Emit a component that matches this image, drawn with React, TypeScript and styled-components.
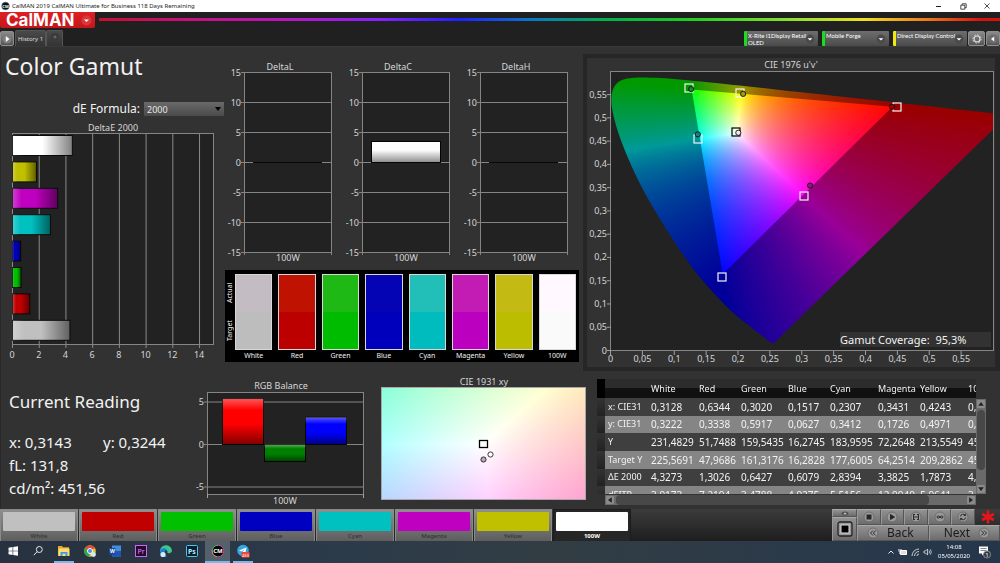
import React, { useEffect, useRef } from "react";
import styled, { createGlobalStyle, css } from "styled-components";

const FONT = '"Noto Sans", "Open Sans", sans-serif';

const GlobalStyle = createGlobalStyle`
  *, *::before, *::after { box-sizing: border-box; }
  html, body { margin: 0; background: #323232; }
  body { font-family: ${FONT}; color: #f2f2f2; overflow-x: hidden; }
  button, select { font-family: inherit; }
`;

/* ---------- colour science ---------- */

type Pair = [number, number];

const LOCUS_XY: Pair[] = [
  [0.1741, 0.005], [0.1714, 0.0051], [0.1644, 0.0109], [0.1566, 0.0177], [0.144, 0.0297],
  [0.1241, 0.0578], [0.1096, 0.0868], [0.0913, 0.1327], [0.0687, 0.2007], [0.0454, 0.295],
  [0.0235, 0.4127], [0.0082, 0.5384], [0.0039, 0.6548], [0.0139, 0.7502], [0.0389, 0.812],
  [0.0743, 0.8338], [0.1142, 0.8262], [0.1547, 0.8059], [0.2296, 0.7543], [0.3016, 0.6923],
  [0.3731, 0.6245], [0.4441, 0.5547], [0.5125, 0.4866], [0.5752, 0.4242], [0.627, 0.3725],
  [0.6915, 0.3083], [0.7347, 0.2653],
];

const xyToUv = ([x, y]: Pair): Pair => {
  const d = -2 * x + 12 * y + 3;
  return [(4 * x) / d, (9 * y) / d];
};

const uvToXy = ([u, v]: Pair): Pair => {
  const d = 6 * u - 16 * v + 12;
  return [(9 * u) / d, (4 * v) / d];
};

const xyToRgb = ([x, y]: Pair, gamma: number): [number, number, number] => {
  const X = x / y;
  const Z = (1 - x - y) / y;
  const lin = [
    3.2406 * X - 1.5372 - 0.4986 * Z,
    -0.9689 * X + 1.8758 + 0.0415 * Z,
    0.0557 * X - 0.204 + 1.057 * Z,
  ].map((c) => Math.max(0, c));
  const top = Math.max(...lin, 0.000001);
  return lin.map((c) => 255 * Math.pow(c / top, 1 / gamma)) as [number, number, number];
};

const MEASURED = {
  red: xyToUv([0.6344, 0.3338]),
  green: xyToUv([0.302, 0.5917]),
  blue: xyToUv([0.1517, 0.0627]),
};

type Shade = (fx: number, fy: number) => [number, number, number];

const CanvasFill = styled.canvas`
  display: block;
  width: 100%;
  height: 100%;
`;

function ShadedField({ width, height, shade }: { width: number; height: number; shade: Shade }) {
  const ref = useRef<HTMLCanvasElement>(null);
  useEffect(() => {
    const ctx = ref.current?.getContext("2d");
    if (!ctx) return;
    const image = ctx.createImageData(width, height);
    for (let j = 0; j < height; j++) {
      for (let i = 0; i < width; i++) {
        const [r, g, b] = shade((i + 0.5) / width, 1 - (j + 0.5) / height);
        image.data.set([r, g, b, 255], (j * width + i) * 4);
      }
    }
    ctx.putImageData(image, 0, 0);
  }, [width, height, shade]);
  return <CanvasFill ref={ref} width={width} height={height} />;
}

const gamutShade: Shade = (fx, fy) => xyToRgb(uvToXy([fx * 0.6, Math.max(fy * 0.6, 0.001)]), 1.2);
const whiteShade: Shade = (fx, fy) =>
  xyToRgb([0.3127 + (fx - 0.5) * 0.088, 0.329 + (fy - 0.5) * 0.09], 2.2);

/* ---------- window chrome ---------- */

const Page = styled.div`
  display: flex;
  flex-direction: column;
  min-height: 100vh;
  background: #323232;
`;

const TitleBar = styled.header`
  display: flex;
  align-items: center;
  height: 12px;
  padding: 0 6px 0 1px;
  background: #fff;
  color: #222;
  font-size: 6px;
  line-height: 12px;
`;

const TitleText = styled.span`
  flex: 1;
  margin-left: 2px;
`;

const PlainButton = styled.button`
  display: flex;
  align-items: center;
  justify-content: center;
  padding: 0;
  border: 0;
  background: none;
  color: inherit;
`;

const WindowButton = styled(PlainButton)`
  width: 14px;
  height: 12px;
  margin-left: 10px;
`;

const Brand = styled.div`
  display: flex;
  align-items: flex-start;
  height: 18px;
  background: #202020;
`;

const Logo = styled.button`
  display: flex;
  align-items: center;
  justify-content: space-between;
  width: 95px;
  height: 16px;
  padding: 0 3px 0 6px;
  border: 0;
  border-radius: 0 0 2px 2px;
  background: linear-gradient(#dc2024, #c4161b);
  color: #fff;
  font: 700 17px/16px Inter, sans-serif;
`;

const Rainbow = styled.div`
  flex: 1;
  height: 3px;
  margin: 6px 0 0 4px;
  background: linear-gradient(90deg, #c8102e 0%, #c81078 9%, #b418c8 22%, #8a20ff 31%, #2020ff 40%, #0878c8 48%, #00b050 56%, #20d020 66%, #90e030 77%, #f0e020 85%, #f07818 92%, #d81010 98%);
`;

const TabRow = styled.nav`
  display: flex;
  align-items: flex-end;
  height: 16px;
  background: #202020;
`;

const GreyButton = styled(PlainButton)`
  border: 1px solid #8e8e8e;
  border-radius: 2px;
  background: linear-gradient(#8a8a8a, #555);
`;

const SideButton = styled(GreyButton)<{ $w: number }>`
  width: ${(p) => p.$w}px;
  height: 15px;
  margin-left: 1px;
`;

const PlayToggle = styled(GreyButton)`
  width: 14px;
  height: 15px;
  margin-right: 1px;
`;

const Tab = styled.button<{ $w: number }>`
  width: ${(p) => p.$w}px;
  height: 16px;
  padding: 0;
  border: 1px solid #555;
  border-bottom: 0;
  border-radius: 2px 2px 0 0;
  background: linear-gradient(#4a4a4a, #333);
  color: #ddd;
  font-size: 6px;
  line-height: 14px;
`;

const Spacer = styled.div`
  flex: 1;
`;

const Device = styled.button<{ $accent: string; $w: number }>`
  display: flex;
  align-items: center;
  justify-content: space-between;
  width: ${(p) => p.$w}px;
  height: 15px;
  margin-left: 4px;
  padding: 0 3px 0 1px;
  border: 0;
  border-left: 3px solid ${(p) => p.$accent};
  border-radius: 1px;
  background: linear-gradient(#6e6e6e, #4b4b4b);
  color: #fff;
  font-family: Lato, sans-serif;
  font-size: 6px;
  line-height: 7px;
  text-align: left;
  white-space: nowrap;
`;

const DeviceText = styled.span`
  align-self: flex-start;
  flex: 1;
  min-width: 0;
  margin-top: 1px;
`;

const KnobSvg = styled.svg`
  flex: none;
`;

function Knob() {
  return (
    <KnobSvg width="10" height="10" viewBox="0 0 10 10" aria-hidden="true">
      <circle cx="5" cy="5" r="4.4" fill="#4a4a4a" />
      <path d="M2.6 4.2h4.8L5 6.6z" fill="#fff" />
    </KnobSvg>
  );
}

/* ---------- content layout ---------- */

const Content = styled.main`
  flex: 1;
  border-left: 1px solid #282828;
  border-top: 1px solid #3a3a3a;
`;

const TopRow = styled.div`
  display: grid;
  grid-template-columns: minmax(0, 224fr) minmax(0, 354fr) minmax(0, 421fr);
  align-items: start;
`;

const BottomRow = styled.div`
  display: grid;
  grid-template-columns: minmax(0, 188fr) minmax(0, 185fr) minmax(0, 215fr) minmax(0, 411fr);
  align-items: start;
`;

const Chart = styled.svg`
  display: block;
  width: 100%;
  height: auto;
  font-family: ${FONT};
  font-size: 9px;
  fill: #d6d6d6;
`;

const PageTitle = styled.h1`
  margin: 4px 0 0 4px;
  font-size: 23px;
  line-height: 31px;
  font-weight: 400;
`;

const FormulaRow = styled.label`
  display: flex;
  align-items: center;
  justify-content: flex-end;
  gap: 4px;
  margin: 19px 0 3px;
  padding-right: 1px;
  font-size: 12px;
  line-height: 16px;
`;

const FormulaSelect = styled.select`
  appearance: none;
  width: 80px;
  height: 14px;
  padding: 1px 3px 0;
  border: 0;
  border-radius: 0;
  background: linear-gradient(180deg, #6a6a6a, #4a4a4a);
  color: #e6e6e6;
  font-size: 9px;
  line-height: 13px;
`;

const SelectWrap = styled.span`
  position: relative;
  display: flex;
`;

const SelectArrow = styled.svg`
  position: absolute;
  right: 2px;
  top: 5px;
  pointer-events: none;
`;

const ChartStrip = styled.div`
  display: grid;
  grid-template-columns: repeat(3, minmax(0, 1fr));
`;

/* ---------- DeltaE chart ---------- */

const DELTA_E = [
  { name: "100W", value: 4.48, color: "#ffffff" },
  { name: "Yellow", value: 1.79, color: "#c0c000" },
  { name: "Magenta", value: 3.38, color: "#c000c0" },
  { name: "Cyan", value: 2.84, color: "#00c0c0" },
  { name: "Blue", value: 0.61, color: "#0000c0" },
  { name: "Green", value: 0.64, color: "#00c000" },
  { name: "Red", value: 1.3, color: "#c00000" },
  { name: "White", value: 4.3, color: "#c0c0c0" },
];

function DeltaEChart() {
  const unit = 13.36;
  return (
    <Chart viewBox="0 0 224 250" role="img" aria-label="DeltaE 2000">
      <defs>
        <linearGradient id="barSheen">
          <stop offset="0" stopColor="#fff" stopOpacity=".25" />
          <stop offset=".2" stopColor="#fff" stopOpacity="0" />
          <stop offset=".5" stopColor="#000" stopOpacity="0" />
          <stop offset="1" stopColor="#000" stopOpacity=".5" />
        </linearGradient>
      </defs>
      <text x="112" y="11" textAnchor="middle">DeltaE 2000</text>
      <rect x="11.5" y="13.5" width="201" height="211" fill="#222" stroke="#858585" />
      {[0, 2, 4, 6, 8, 10, 12, 14].map((n) => (
        <g key={n}>
          <path d={`M${11.5 + n * unit} 14V228`} stroke="#8a8a8a" />
          <text x={11 + n * unit} y="238" textAnchor="middle">{n}</text>
        </g>
      ))}
      {DELTA_E.map((bar, i) => {
        const box = { x: 11.5, y: 15.5 + i * 26.4, width: bar.value * unit, height: 20 };
        return (
          <g key={bar.name}>
            <rect {...box} fill={bar.color} stroke="#0a0a0a" />
            <rect {...box} fill="url(#barSheen)" />
          </g>
        );
      })}
    </Chart>
  );
}

/* ---------- Delta L / C / H ---------- */

function DeltaChart({ title, value }: { title: string; value: number }) {
  const zero = 115.5;
  return (
    <Chart viewBox="0 0 118 223" role="img" aria-label={title}>
      <defs>
        <linearGradient id="whiteBar" x2="0" y2="1">
          <stop offset=".4" stopColor="#fff" />
          <stop offset="1" stopColor="#8c8c8c" />
        </linearGradient>
      </defs>
      <text x="55" y="23" textAnchor="middle">{title}</text>
      <rect x="19.5" y="25.5" width="87" height="180" fill="#222" stroke="#858585" />
      {[15, 10, 5, 0, -5, -10, -15].map((n) => (
        <g key={n}>
          <path d={`M16 ${zero - n * 6}H106`} stroke="#858585" />
          <text x="16" y={zero - n * 6 + 3} textAnchor="end">{n}</text>
        </g>
      ))}
      <path d="M19.5 205v3M106.5 205v3" stroke="#858585" />
      {value > 0 ? (
        <rect x="28.5" y={zero - value * 6} width="69" height={value * 6} fill="url(#whiteBar)" stroke="#050505" />
      ) : (
        <path d={`M28 ${zero}h69`} stroke="#080808" />
      )}
      <text x="63" y="214" textAnchor="middle">100W</text>
    </Chart>
  );
}

/* ---------- swatch comparison ---------- */

const SWATCHES = [
  { name: "White", actual: "#c3bdc3", target: "#bdbdbd" },
  { name: "Red", actual: "#c01200", target: "#bc0000" },
  { name: "Green", actual: "#1eb914", target: "#00bc00" },
  { name: "Blue", actual: "#0404b4", target: "#0000bc" },
  { name: "Cyan", actual: "#22bfb9", target: "#00bcbf" },
  { name: "Magenta", actual: "#c31cb5", target: "#bc00bf" },
  { name: "Yellow", actual: "#c3bb14", target: "#bcbc00" },
  { name: "100W", actual: "#fff8fe", target: "#fafafa" },
];

const SwatchPanel = styled.section`
  display: flex;
  padding: 4px 3px 0 0;
  height: 92px;
  background: #000;
  font-size: 7px;
  line-height: 11px;
`;

const SwatchSide = styled.div`
  display: flex;
  flex-direction: column;
  width: 10px;
  height: 76px;
`;

const SideLabel = styled.span`
  flex: 1;
  writing-mode: vertical-rl;
  transform: rotate(180deg);
  text-align: center;
  line-height: 10px;
`;

const SwatchList = styled.div`
  flex: 1;
  display: grid;
  grid-template-columns: repeat(8, minmax(0, 1fr));
  gap: 6px;
`;

const SwatchItem = styled.figure`
  margin: 0;
`;

const SwatchColor = styled.div<{ $actual: string; $target: string }>`
  height: 76px;
  border: 1px solid #d8d8d8;
  background: linear-gradient(${(p) => p.$actual} 50%, ${(p) => p.$target} 50%);
`;

const SwatchName = styled.figcaption`
  text-align: center;
`;

/* ---------- CIE 1976 ---------- */

const GamutPanel = styled.section`
  margin: 7px 0 0 4px;
  border: 4px solid #262626;
  border-right-width: 5px;
  background: #323232;
`;

const ORIGIN = { x: 23.5, y: 292.5 };
const U = 637.5;
const V = 465.3;
const toPlot = ([u, v]: Pair): Pair => [ORIGIN.x + u * U, ORIGIN.y - v * V];

function smoothLocus() {
  const p = LOCUS_XY.map(xyToUv).map(toPlot);
  let d = `M${p[0].join(" ")}`;
  for (let i = 0; i < p.length - 1; i++) {
    const a = p[Math.max(i - 1, 0)];
    const b = p[i];
    const c = p[i + 1];
    const e = p[Math.min(i + 2, p.length - 1)];
    d += `C${b[0] + (c[0] - a[0]) / 6} ${b[1] + (c[1] - a[1]) / 6} ${c[0] - (e[0] - b[0]) / 6} ${c[1] - (e[1] - b[1]) / 6} ${c[0]} ${c[1]}`;
  }
  return d + "Z";
}

const LOCUS_PATH = smoothLocus();
const TRIANGLE_PATH =
  "M" + [MEASURED.red, MEASURED.green, MEASURED.blue].map((c) => toPlot(c).join(" ")).join("L") + "Z";

const TARGETS: { uv: Pair; dark?: boolean }[] = [
  { uv: [0.4495, 0.5229] },
  { uv: [0.1235, 0.5635] },
  { uv: [0.1754, 0.159] },
  { uv: [0.137, 0.4555] },
  { uv: [0.304, 0.3315] },
  { uv: [0.203, 0.553] },
  { uv: [0.1965, 0.469], dark: true },
];

const READINGS: { uv: Pair; fill: string }[] = [
  { uv: [0.4415, 0.5237], fill: "#9a0008" },
  { uv: [0.1265, 0.5618], fill: "#089028" },
  { uv: [0.208, 0.5515], fill: "#a89a10" },
  { uv: [0.137, 0.4645], fill: "#108880" },
  { uv: [0.313, 0.3545], fill: "#8c1a80" },
  { uv: [0.2005, 0.468], fill: "#f4e8f0" },
];

const tickLabel = (n: number) => String(Math.round(n * 100) / 100).replace(".", ",");

function GamutChart() {
  const ticks = Array.from({ length: 12 }, (_, i) => i * 0.05);
  return (
    <Chart viewBox="0 0 408 309" role="img" aria-label="CIE 1976 u'v'">
      <defs>
        <clipPath id="plotArea"><rect x="23" y="13" width="383" height="280" /></clipPath>
        <clipPath id="locus"><path d={LOCUS_PATH} clipPath="url(#plotArea)" /></clipPath>
      </defs>
      <text x="204" y="10" textAnchor="middle">CIE 1976 u'v'</text>
      <rect x="23.5" y="13.5" width="383" height="279" fill="#222" stroke="#858585" />
      {ticks.map((n) => (
        <g key={n}>
          <path d={`M${ORIGIN.x + n * U} 293v4M20 ${ORIGIN.y - n * V}h4`} stroke="#a0a0a0" />
          <text x={ORIGIN.x + n * U} y="304" textAnchor="middle">{tickLabel(n)}</text>
          <text x="20" y={ORIGIN.y - n * V + 3} textAnchor="end">{tickLabel(n)}</text>
        </g>
      ))}
      <g clipPath="url(#locus)">
        <foreignObject x="23.5" y="13.5" width="382.5" height="279">
          <ShadedField width={383} height={279} shade={gamutShade} />
        </foreignObject>
        <path d={`M23 13H407V293H23Z${TRIANGLE_PATH}`} fillRule="evenodd" fill="#000" fillOpacity=".4" />
      </g>
      <path d="M406.500 13V293" stroke="#858585" />
      {TARGETS.map(({ uv, dark }) => {
        const [x, y] = toPlot(uv);
        return <rect key={uv.join()} x={Math.round(x) - 4} y={Math.round(y) - 4} width="8" height="8" fill="none" stroke={dark ? "#000" : "#f4f4f4"} strokeWidth="1.200" />;
      })}
      {READINGS.map(({ uv, fill }) => {
        const [x, y] = toPlot(uv);
        return <circle key={uv.join()} cx={x} cy={y} r="2.600" fill={fill} stroke="#111" strokeWidth=".9" />;
      })}
      <rect x="253" y="274" width="151" height="15" fill="#323232" />
      <text x="253" y="286" fontSize="11" fill="#f2f2f2" xmlSpace="preserve">Gamut Coverage:  95,3%</text>
    </Chart>
  );
}

/* ---------- current reading ---------- */

const Readings = styled.section`
  padding: 19px 0 0 8px;
  font-size: 15px;
  line-height: 23px;
`;

const ReadingTitle = styled.h2`
  margin: 0 0 18px;
  font-size: 17px;
  line-height: 23px;
  font-weight: 400;
`;

const ReadingLine = styled.div`
  display: grid;
  grid-template-columns: 94px 1fr;
`;

const BALANCE = [
  { x: 33.5, value: 5.4, color: "#ff0000" },
  { x: 75.5, value: -2, color: "#008000" },
  { x: 116.5, value: 3.2, color: "#0000ff" },
];

function BalanceChart() {
  const zero = 73.5;
  return (
    <Chart viewBox="0 0 185 138" role="img" aria-label="RGB Balance">
      <defs>
        <linearGradient id="column" x2="0" y2="1">
          <stop offset="0" stopColor="#fff" stopOpacity=".35" />
          <stop offset=".25" stopColor="#fff" stopOpacity="0" />
          <stop offset=".55" stopColor="#000" stopOpacity="0" />
          <stop offset="1" stopColor="#000" stopOpacity=".5" />
        </linearGradient>
      </defs>
      <text x="92" y="18" textAnchor="middle">RGB Balance</text>
      <rect x="18.500" y="21.500" width="156" height="102" fill="#222" stroke="#858585" />
      {[5, 0, -5].map((n) => (
        <g key={n}>
          <path d={`M15 ${zero - n * 8.5}H174`} stroke="#858585" />
          <text x="15" y={zero - n * 8.5 + 3} textAnchor="end">{n}</text>
        </g>
      ))}
      <path d="M18.500 123v4M174.500 123v4" stroke="#a0a0a0" />
      {BALANCE.map((b) => {
        const size = Math.abs(b.value) * 8.5;
        const box = { x: b.x, y: b.value > 0 ? zero - size : zero, width: 41, height: size };
        return (
          <g key={b.color}>
            <rect {...box} fill={b.color} stroke="#050505" />
            <rect {...box} fill="url(#column)" />
          </g>
        );
      })}
      <text x="96" y="133" textAnchor="middle">100W</text>
    </Chart>
  );
}

function WhitePointChart() {
  return (
    <Chart viewBox="0 0 215 138" role="img" aria-label="CIE 1931 xy">
      <text x="110" y="14" textAnchor="middle">CIE 1931 xy</text>
      <foreignObject x="8" y="17" width="204" height="112">
        <ShadedField width={204} height={112} shade={whiteShade} />
      </foreignObject>
      <rect x="7.500" y="16.500" width="204" height="112" fill="none" stroke="#a8a8a8" />
      <rect x="105.500" y="69.500" width="8" height="7" fill="none" stroke="#000" strokeWidth="1.300" />
      <circle cx="116.500" cy="83.500" r="2.600" fill="#fff" stroke="#222" strokeWidth=".9" />
      <circle cx="109.500" cy="88.500" r="2.600" fill="#b8a8b8" stroke="#222" strokeWidth=".9" />
    </Chart>
  );
}

/* ---------- data table ---------- */

const COLUMNS = ["White", "Red", "Green", "Blue", "Cyan", "Magenta", "Yellow", "100W"];
const COLUMN_WIDTHS = [48, 42, 47, 42, 48, 42, 48, 48];
const ROWS: [string, string[]][] = [
  ["x: CIE31", ["0,3128", "0,6344", "0,3020", "0,1517", "0,2307", "0,3431", "0,4243", "0,3143"]],
  ["y: CIE31", ["0,3222", "0,3338", "0,5917", "0,0627", "0,3412", "0,1726", "0,4971", "0,3244"]],
  ["Y", ["231,4829", "51,7488", "159,5435", "16,2745", "183,9595", "72,2648", "213,5549", "451,5600"]],
  ["Target Y", ["225,5691", "47,9686", "161,3176", "16,2828", "177,6005", "64,2514", "209,2862", "451,5600"]],
  ["ΔE 2000", ["4,3273", "1,3026", "0,6427", "0,6079", "2,8394", "3,3825", "1,7873", "4,4800"]],
  ["dEITP", ["3,9173", "7,2194", "3,4788", "4,9275", "5,5156", "12,9949", "5,9641", "3,9000"]],
];

const DataPanel = styled.section`
  display: grid;
  grid-template-columns: minmax(0, 1fr) 10px;
  grid-template-rows: 115px 11px;
  margin: 8px 14px 0 8px;
`;

const TableClip = styled.div`
  overflow: hidden;
`;

const DataTable = styled.table`
  width: 416px;
  height: 125px;
  table-layout: fixed;
  border-collapse: collapse;
  font-size: 9px;
  line-height: 14px;
`;

const HeadRow = styled.tr`
  height: 19px;
  background: linear-gradient(#2c2c2c 50%, #111 50%);
`;

const cell = css`
  padding: 0 0 0 3px;
  overflow: hidden;
  font-weight: 400;
  text-align: left;
  white-space: nowrap;
`;

const HeadCell = styled.th`${cell}`;
const DataCell = styled.td`
  ${cell}
  font-size: 10px;
`;

const Gutter = styled.td<{ $head?: boolean }>`
  padding: 0;
  background: ${(p) => (p.$head ? "#000" : "linear-gradient(#333, #222)")};
`;

const BodyRow = styled.tr`
  background: #3f3f3f;
  &:nth-child(even) { background: #858585; }
`;

const ScrollY = styled.div`
  display: grid;
  grid-template-rows: 10px 1fr 10px;
  margin-top: 20px;
  background: #6a6a6a;
`;

const ScrollX = styled.div`
  display: grid;
  grid-template-columns: 10px 1fr 10px;
  margin: 1px 0 0 8px;
  background: #6a6a6a;
`;

const ScrollButton = styled(PlainButton)`
  border: 1px solid #6a6a6a;
  border-radius: 2px;
  background: #8a8a8a;
`;

const Thumb = styled.div<{ $vertical?: boolean }>`
  border-radius: 4px;
  background: #484848;
  margin: ${(p) => (p.$vertical ? "1px 1px 14px" : "0 37px 0 1px")};
`;

function Arrow({ turn }: { turn: number }) {
  return (
    <svg width="6" height="6" viewBox="0 0 6 6" aria-hidden="true">
      <path d="M3 1L5.800 4.800H.2z" fill="#222" transform={`rotate(${turn} 3 3)`} />
    </svg>
  );
}

/* ---------- pattern bar ---------- */

const PatternBar = styled.div`
  display: flex;
  height: 32px;
  background: linear-gradient(#3c3c3c, #1e1e1e);
`;

const PatternList = styled.div`
  display: grid;
  flex: 632 1 0;
  grid-template-columns: repeat(8, minmax(0, 1fr));
`;

const PatternButton = styled.button<{ $on?: boolean }>`
  display: flex;
  flex-direction: column;
  margin: 0 1px 0 0;
  padding: 2px 2px 0;
  border: 1px solid ${(p) => (p.$on ? "#1c1c1c" : "#8a8a8a")};
  border-bottom-color: #444;
  background: ${(p) => (p.$on ? "#262626" : "linear-gradient(#8e8e8e, #5e5e5e)")};
  color: ${(p) => (p.$on ? "#fff" : "#333")};
  font-size: 6px;
  line-height: 10px;
  font-weight: ${(p) => (p.$on ? 700 : 500)};
`;

const PatternColor = styled.span<{ $color: string }>`
  width: 100%;
  height: 19px;
  border-radius: 1px;
  background: ${(p) => p.$color};
`;

const PatternName = styled.span`
  width: 100%;
  text-align: center;
`;

const Transport = styled.div`
  display: grid;
  flex: 368 1 0;
  grid-template-columns: 1fr 25px 143px;
`;

const StopColumn = styled.div`
  grid-column: 2;
  display: grid;
  grid-template-rows: 8px 24px;
`;

const TransportButton = styled(PlainButton)`
  border: 1px solid #a0a0a0;
  border-color: #a8a8a8 #555 #555 #999;
  background: linear-gradient(#929292, #6c6c6c);
`;

const TransportMain = styled.div`
  display: grid;
  grid-template-rows: 16px 16px;
`;

const IconRow = styled.div`
  display: grid;
  grid-template-columns: repeat(5, minmax(0, 1fr)) 25px;
`;

const NavRow = styled.div`
  display: grid;
  grid-template-columns: 1fr 1fr;
`;

const NavButton = styled(TransportButton)<{ $end?: boolean }>`
  justify-content: ${(p) => (p.$end ? "flex-end" : "flex-start")};
  gap: 8px;
  padding: 0 9px;
  color: #1c1c1c;
  font-size: 12px;
  line-height: 14px;
`;

const Center = styled.span`
  display: flex;
  align-items: center;
  justify-content: center;
`;

function RoundIcon({ children }: { children: React.ReactNode }) {
  return (
    <svg width="12" height="12" viewBox="0 0 12 12" fill="none" stroke="#2a2a2a" strokeWidth="1" aria-hidden="true">
      <circle cx="6" cy="6" r="5" fill="#9a9a9a" stroke="#6e6e6e" />
      {children}
    </svg>
  );
}

const TRANSPORT_ICONS: [string, React.ReactNode][] = [
  ["Stop", <rect key="i" x="4" y="4" width="4" height="4" fill="#222" />],
  ["Play", <path key="i" d="M4.500 3.500L8.500 6L4.500 8.500z" fill="#222" />],
  ["Sequence", <path key="i" d="M3.500 3v6M8.500 3v6M3.500 6h5M5 3.500h-1.500M7 3.500h1.500M5 8.500h-1.500M7 8.500h1.500" />],
  ["Continuous", <path key="i" d="M6 6C5 4.500 3 4.500 3 6S5 7.500 6 6S9 4.500 9 6S7 7.500 6 6" />],
  ["Refresh", <path key="i" d="M3.300 5.500A2.800 2.800 0 0 1 8.200 4.200M8.700 2.600v2H6.700M8.700 6.500A2.800 2.800 0 0 1 3.800 7.800M3.300 9.400v-2h2" />],
];

/* ---------- taskbar ---------- */

const Taskbar = styled.footer`
  display: flex;
  height: 22px;
  background: linear-gradient(90deg, #27313f 0%, #2c3b4a 35%, #323d43 55%, #2b3a4a 80%, #25364b 100%);
`;

const TaskButton = styled(PlainButton)<{ $open?: boolean; $active?: boolean }>`
  height: 22px;
  border: solid transparent;
  border-width: 0 0 2px;
  ${(p) => p.$open && css`
    background: linear-gradient(#76b9ed, #76b9ed) bottom / 20px 2px no-repeat border-box;
  `}
  ${(p) => p.$active && css`
    border-bottom-color: #76b9ed;
    background: #54606c;
  `}
`;

const TaskList = styled.div`
  display: grid;
  grid-template-columns: repeat(10, minmax(0, 1fr));
  width: 256px;
`;

const Tray = styled.div`
  display: flex;
  align-items: center;
  gap: 3px;
  margin-left: auto;
  padding-right: 9px;
`;

const Clock = styled.time`
  margin: 0 5px 0 3px;
  font-size: 6px;
  line-height: 9px;
  text-align: center;
  color: #fff;
`;

const TASKS: { name: string; open?: boolean; active?: boolean; icon: React.ReactNode }[] = [
  { name: "Start", icon: <path d="M2.500 3.700L6.600 3v3.700H2.500zM7.200 2.900L12 2.200v4.500H7.200zM2.500 7.300h4.100V11l-4.100-.7zM7.200 7.300H12v4.500l-4.800-.7z" fill="#fff" /> },
  { name: "Search", icon: <g fill="none" stroke="#e8e8e8"><circle cx="8.300" cy="5.500" r="3" /><path d="M6 7.800L2.800 11.200" /></g> },
  { name: "File Explorer", open: true, icon: <g><path d="M1 2h4l1 1.200h6V12H1z" fill="#e5a92a" /><path d="M1.500 4.500h11V12h-11z" fill="#ffdb74" /><path d="M3.500 8h7v4h-2V9.800h-3V12h-2z" fill="#3b9ce0" /></g> },
  { name: "Chrome", icon: <g><circle cx="7" cy="7" r="5.800" fill="#f1c52c" /><path d="M7 7L2 4A5.800 5.800 0 0 1 12 4z" fill="#e04a3a" /><path d="M7 7L2 4A5.800 5.800 0 0 0 6.500 12.800z" fill="#30a552" /><circle cx="7" cy="7" r="2.500" fill="#4a90e8" stroke="#fff" /><circle cx="10.500" cy="10.500" r="2.400" fill="#d7e9f0" /></g> },
  { name: "Word", icon: <g><path d="M4 1.500h9v11H4z" fill="#3f8ee0" /><path d="M4 7h9v5.500H4z" fill="#1d55b0" /><path d="M1 4h6.500v6.500H1z" fill="#1a4aa0" /><text x="2" y="9" fontSize="5" fontWeight="700" fill="#fff">W</text></g> },
  { name: "Premiere", icon: <g><rect x="1.500" y="1.500" width="11" height="11" fill="#2a0634" stroke="#c46cf0" /><text x="3.500" y="9.800" fontSize="7" fill="#e48cff">Pr</text></g> },
  { name: "Edge", icon: <g><path d="M1 8A6 6 0 0 1 13 6.500C13 9 10.500 9.500 8.500 9C9 6 6 5 4 6.500S1.500 8 1 8z" fill="#3fc58c" /><path d="M1 8C1 4 6 3 8 6C5 6 4.500 10 8 12.800A6 6 0 0 1 1 8z" fill="#1b7fd4" /><circle cx="4" cy="10.500" r="2.600" fill="#d5ecf6" /></g> },
  { name: "Photoshop", icon: <g><rect x="1.500" y="1.500" width="11" height="11" rx="1" fill="#06202c" stroke="#49c8f5" /><text x="3" y="9.800" fontSize="7" fontWeight="700" fill="#bdeaff">Ps</text></g> },
  { name: "CalMAN", active: true, icon: <g><circle cx="7" cy="7" r="5.800" fill="#050505" stroke="#b04ca0" /><path d="M7 1.200A5.800 5.800 0 0 0 1.200 7" stroke="#4ab04a" fill="none" /><path d="M1.200 7A5.800 5.800 0 0 0 6 12.700" stroke="#d09030" fill="none" /><text x="7" y="9.200" textAnchor="middle" fontSize="6" fontWeight="700" fill="#fff">CM</text></g> },
  { name: "Telegram", open: true, icon: <g><circle cx="7" cy="6.500" r="5.800" fill="#35a6de" /><path d="M3 6.500L10.500 3.500L9.200 9.500L6.500 7.800L9 5L5.400 7.400z" fill="#fff" /><rect x="5.500" y="8" width="8" height="5.500" rx="1" fill="#ee4540" /><text x="9.500" y="12.500" textAnchor="middle" fontSize="4" fill="#fff">433</text></g> },
];

export default function App() {
  return (
    <Page>
      <GlobalStyle />
      <TitleBar>
        <svg width="9" height="10" viewBox="0 0 9 10" aria-hidden="true">
          <circle cx="4.500" cy="5" r="3.800" fill="#111" stroke="#2a6a80" strokeWidth=".6" />
          <text x="4.500" y="6.600" textAnchor="middle" fontSize="4" fontWeight="700" fill="#fff">CM</text>
        </svg>
        <TitleText>CalMAN 2019 CalMAN Ultimate for Business 118 Days Remaining</TitleText>
        <WindowButton aria-label="Minimize"><svg width="6" height="6"><path d="M0 3.500h5" stroke="#222" /></svg></WindowButton>
        <WindowButton aria-label="Restore"><svg width="7" height="7" fill="none" stroke="#222" strokeWidth=".8"><path d="M.8 2.200h4v4h-4zM2.200 2V.8h4v4H5" /></svg></WindowButton>
        <WindowButton aria-label="Close"><svg width="6" height="6"><path d="M.5.5l5 5M5.500.5l-5 5" stroke="#222" strokeWidth=".8" /></svg></WindowButton>
      </TitleBar>
      <Brand>
        <Logo>
          CalMAN
          <svg width="11" height="11" viewBox="0 0 11 11" aria-hidden="true"><circle cx="5.500" cy="5.500" r="5" fill="#d8383b" /><path d="M3 4.500h5L5.500 7z" fill="#fff" /></svg>
        </Logo>
        <Rainbow />
      </Brand>
      <TabRow>
        <PlayToggle aria-label="Show workflow"><svg width="10" height="10"><circle cx="5" cy="5" r="4.500" fill="#7d7d7d" /><path d="M3.800 2L7.500 5L3.800 8z" fill="#fff" /></svg></PlayToggle>
        <Tab $w={31}>History 1</Tab>
        <Tab $w={17} aria-label="New history"><svg width="8" height="8"><circle cx="4" cy="4" r="4" fill="#3a3a3a" /><path d="M2.500 4h3M4 2.500v3" stroke="#777" /></svg></Tab>
        <Spacer />
        <Device $w={74} $accent="#18e018"><DeviceText>X-Rite i1Display Retail<br />OLED</DeviceText><Knob /></Device>
        <Device $w={67} $accent="#18e018"><DeviceText>Mobile Forge</DeviceText><Knob /></Device>
        <Device $w={74} $accent="#f0e810"><DeviceText>Direct Display Control</DeviceText><Knob /></Device>
        <SideButton $w={17} aria-label="Settings"><svg width="10" height="10"><circle cx="5" cy="5" r="3" fill="none" stroke="#ddd" strokeWidth="1.200" /><circle cx="5" cy="5" r="4.100" fill="none" stroke="#ddd" strokeDasharray="1.600 1.600" /></svg></SideButton>
        <SideButton $w={14} aria-label="Collapse"><svg width="10" height="10"><circle cx="5" cy="5" r="4.500" fill="#6d6d6d" /><path d="M6.200 2.500L3 5l3.200 2.500z" fill="#fff" /></svg></SideButton>
      </TabRow>

      <Content>
        <TopRow>
          <div>
            <PageTitle>Color Gamut</PageTitle>
            <FormulaRow>
              dE Formula:
              <SelectWrap>
                <FormulaSelect defaultValue="2000"><option>2000</option></FormulaSelect>
                <SelectArrow width="8" height="5"><path d="M1 0h6L4 4z" fill="#000" /></SelectArrow>
              </SelectWrap>
            </FormulaRow>
            <DeltaEChart />
          </div>
          <div>
            <ChartStrip>
              <DeltaChart title="DeltaL" value={0} />
              <DeltaChart title="DeltaC" value={3.5} />
              <DeltaChart title="DeltaH" value={0} />
            </ChartStrip>
            <SwatchPanel>
              <SwatchSide><SideLabel>Actual</SideLabel><SideLabel>Target</SideLabel></SwatchSide>
              <SwatchList>
                {SWATCHES.map((s) => (
                  <SwatchItem key={s.name}>
                    <SwatchColor $actual={s.actual} $target={s.target} />
                    <SwatchName>{s.name}</SwatchName>
                  </SwatchItem>
                ))}
              </SwatchList>
            </SwatchPanel>
          </div>
          <GamutPanel><GamutChart /></GamutPanel>
        </TopRow>

        <BottomRow>
          <Readings>
            <ReadingTitle>Current Reading</ReadingTitle>
            <ReadingLine><span>x: 0,3143</span><span>y: 0,3244</span></ReadingLine>
            <div>fL: 131,8</div>
            <div>cd/m²: 451,56</div>
          </Readings>
          <BalanceChart />
          <WhitePointChart />
          <DataPanel>
            <TableClip>
              <DataTable>
                <colgroup>
                  <col style={{ width: 8 }} />
                  <col style={{ width: 43 }} />
                  {COLUMN_WIDTHS.map((w, i) => <col key={i} style={{ width: w }} />)}
                </colgroup>
                <thead>
                  <HeadRow>
                    <Gutter $head />
                    <HeadCell />
                    {COLUMNS.map((c) => <HeadCell key={c} scope="col">{c}</HeadCell>)}
                  </HeadRow>
                </thead>
                <tbody>
                  {ROWS.map(([label, values]) => (
                    <BodyRow key={label}>
                      <Gutter />
                      <HeadCell scope="row">{label}</HeadCell>
                      {values.map((v, i) => <DataCell key={i}>{v}</DataCell>)}
                    </BodyRow>
                  ))}
                </tbody>
              </DataTable>
            </TableClip>
            <ScrollY>
              <ScrollButton aria-label="Scroll up"><Arrow turn={0} /></ScrollButton>
              <Thumb $vertical />
              <ScrollButton aria-label="Scroll down"><Arrow turn={180} /></ScrollButton>
            </ScrollY>
            <ScrollX>
              <ScrollButton aria-label="Scroll left"><Arrow turn={-90} /></ScrollButton>
              <Thumb />
              <ScrollButton aria-label="Scroll right"><Arrow turn={90} /></ScrollButton>
            </ScrollX>
          </DataPanel>
        </BottomRow>
      </Content>

      <PatternBar>
        <PatternList>
          {["#c0c0c0", "#c00000", "#00c000", "#0000c0", "#00c0c0", "#c000c0", "#c0c000", "#ffffff"].map((color, i) => (
            <PatternButton key={color} $on={i === 7}>
              <PatternColor $color={color} />
              <PatternName>{COLUMNS[i]}</PatternName>
            </PatternButton>
          ))}
        </PatternList>
        <Transport>
          <StopColumn>
            <TransportButton aria-label="Expand"><svg width="8" height="5"><ellipse cx="4" cy="2.500" rx="3.500" ry="2" fill="#555" /><path d="M2.500 3.200L4 1.500l1.500 1.700z" fill="#ddd" /></svg></TransportButton>
            <TransportButton aria-label="Pattern window"><svg width="16" height="16"><rect x="1" y="1" width="14" height="14" rx="2" fill="#999" stroke="#222" strokeWidth="1.300" /><rect x="4" y="4" width="8" height="8" fill="#000" stroke="#ddd" /></svg></TransportButton>
          </StopColumn>
          <TransportMain>
            <IconRow>
              {TRANSPORT_ICONS.map(([name, icon]) => (
                <TransportButton key={name} aria-label={name}><RoundIcon>{icon}</RoundIcon></TransportButton>
              ))}
              <Center>
                <svg width="16" height="16" viewBox="0 0 16 16" aria-hidden="true"><path d="M8 1.500v13M2.200 5l11.600 6M2.200 11l11.600-6" stroke="#e8141c" strokeWidth="2.600" /></svg>
              </Center>
            </IconRow>
            <NavRow>
              <NavButton><RoundIcon><path d="M6 3.500L3.500 6L6 8.500M8.800 3.500L6.300 6L8.800 8.500" /></RoundIcon>Back</NavButton>
              <NavButton $end>Next<RoundIcon><path d="M3.200 3.500L5.700 6L3.200 8.500M6 3.500L8.500 6L6 8.500" /></RoundIcon></NavButton>
            </NavRow>
          </TransportMain>
        </Transport>
      </PatternBar>

      <Taskbar>
        <TaskList>
          {TASKS.map((t) => (
            <TaskButton key={t.name} aria-label={t.name} $open={t.open} $active={t.active}>
              <svg width="14" height="14" viewBox="0 0 14 14" aria-hidden="true">{t.icon}</svg>
            </TaskButton>
          ))}
        </TaskList>
        <Tray>
          <svg width="8" height="8" fill="none" stroke="#eee"><path d="M1.500 5.500L4 3l2.500 2.500" /></svg>
          <svg width="10" height="8"><path d="M2.500 2.500h6v4h-6z" fill="#ddd" stroke="#fff" /><path d="M1 1v2.500M3 1v2.500M2 3v3" stroke="#fff" /></svg>
          <svg width="9" height="9" fill="none" stroke="#ccc"><path d="M1 8A7 7 0 0 1 8 1M3.500 8A4.500 4.500 0 0 1 8 3.500M6 8a2 2 0 0 1 2-2" /></svg>
          <svg width="9" height="8" fill="none" stroke="#ddd" strokeWidth=".8"><path d="M1 3h1.500l2-2v6l-2-2H1zM6 2.500q1.200 1.500 0 3M7.300 1.300q2 2.700 0 5.400" /></svg>
          <Clock>14:08<br />05/05/2020</Clock>
          <svg width="13" height="14" viewBox="0 0 13 14"><path d="M1 1.500h9v7H6L4 10.500v-2H1z" fill="#fff" /><path d="M2.500 3.500h6M2.500 5.500h6" stroke="#456" strokeWidth=".7" /><circle cx="9" cy="9.500" r="3.600" fill="#333c46" stroke="#aaa" strokeWidth=".7" /><text x="9" y="11.700" textAnchor="middle" fontSize="6" fill="#fff">1</text></svg>
        </Tray>
      </Taskbar>
    </Page>
  );
}
